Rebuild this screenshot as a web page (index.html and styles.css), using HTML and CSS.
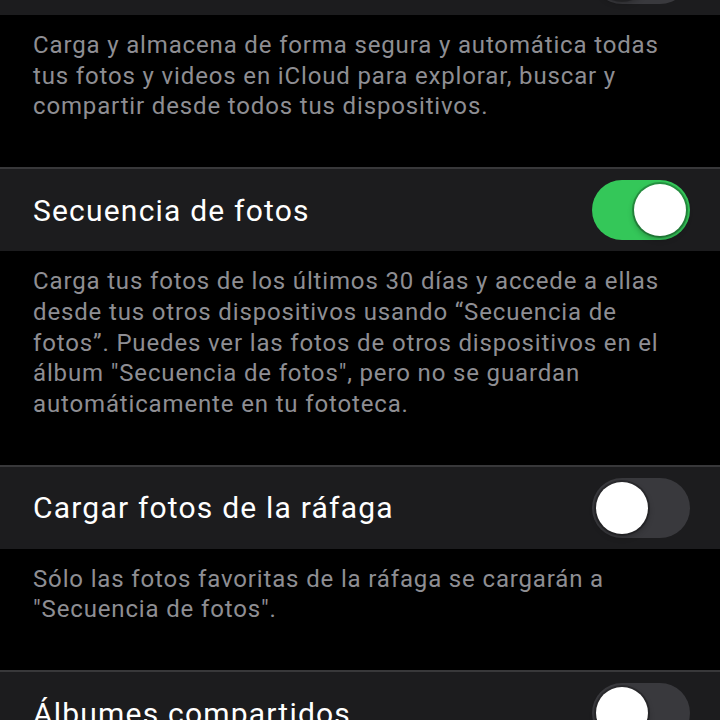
FILE: index.html
```html
<!DOCTYPE html>
<html lang="es">
<head>
  <meta charset="UTF-8" />
  <title>Fotos</title>
  <meta name="viewport" content="width=device-width, initial-scale=1.0">
  <link rel="stylesheet" href="styles.css">
</head>
<body>
  <div class="settings">
    <!-- Fotos de iCloud row, scrolled above the top edge -->
    <div class="cell cell-scrolled">
      <span class="switch"></span>
    </div>
    <p class="cell-footer">
      Carga y almacena de forma segura y automática todas tus fotos y videos en iCloud para explorar, buscar y compartir desde todos tus dispositivos.
    </p>

    <!-- Secuencia de fotos -->
    <div class="cell">
      <span class="cell-title">Secuencia de fotos</span>
      <span class="switch on"></span>
    </div>
    <p class="cell-footer">
      Carga tus fotos de los últimos 30 días y accede a ellas desde tus otros dispositivos usando “Secuencia de fotos”. Puedes ver las fotos de otros dispositivos en el álbum "Secuencia de fotos", pero no se guardan automáticamente en tu fototeca.
    </p>

    <!-- Ráfagas -->
    <div class="cell">
      <span class="cell-title">Cargar fotos de la ráfaga</span>
      <span class="switch"></span>
    </div>
    <p class="cell-footer">
      Sólo las fotos favoritas de la ráfaga se cargarán a "Secuencia de fotos".
    </p>

    <!-- Álbumes compartidos -->
    <div class="cell">
      <span class="cell-title">Álbumes compartidos</span>
      <span class="switch"></span>
    </div>
  </div>
</body>
</html>
```

FILE: styles.css
```css
/* Basic Reset & Font */
* {
  margin: 0;
  padding: 0;
  box-sizing: border-box;
}

body {
  background-color: #000;
  color: #fff;
  font-family: 'Roboto', 'Liberation Sans', Arial, sans-serif;
  overflow: hidden;
}

/* List is scrolled, first row sits above the top edge */
.settings {
  margin-top: -69px;
  display: flex;
  flex-direction: column;
}

/* Row with a title and a switch */
.cell {
  height: 84px;
  background-color: #1c1c1e;
  border-top: 2px solid #38383a;
  display: flex;
  align-items: center;
  justify-content: space-between;
  padding: 0 30px 0 33px;
}
.cell-scrolled {
  justify-content: flex-end;
}
.cell-title {
  font-size: 30px;
  letter-spacing: 1.2px;
}

/* Gray explanation text under a row */
.cell-footer {
  color: #8e8e93;
  font-size: 24px;
  letter-spacing: 0.85px;
  line-height: 30.7px;
  padding: 15px 42px 45px 33px;
}

/* iOS style switch */
.switch {
  position: relative;
  width: 98px;
  height: 60px;
  border-radius: 30px;
  background-color: #39393d;
  flex-shrink: 0;
}
.switch::after {
  content: "";
  position: absolute;
  top: 4px;
  left: 4px;
  width: 52px;
  height: 52px;
  border-radius: 50%;
  background-color: #fff;
  box-shadow: 0 0 0 2px rgba(0, 0, 0, 0.25), 0 3px 6px rgba(0, 0, 0, 0.3);
}
.switch.on {
  background-color: #34c759;
}
.switch.on::after {
  left: auto;
  right: 4px;
}
```
